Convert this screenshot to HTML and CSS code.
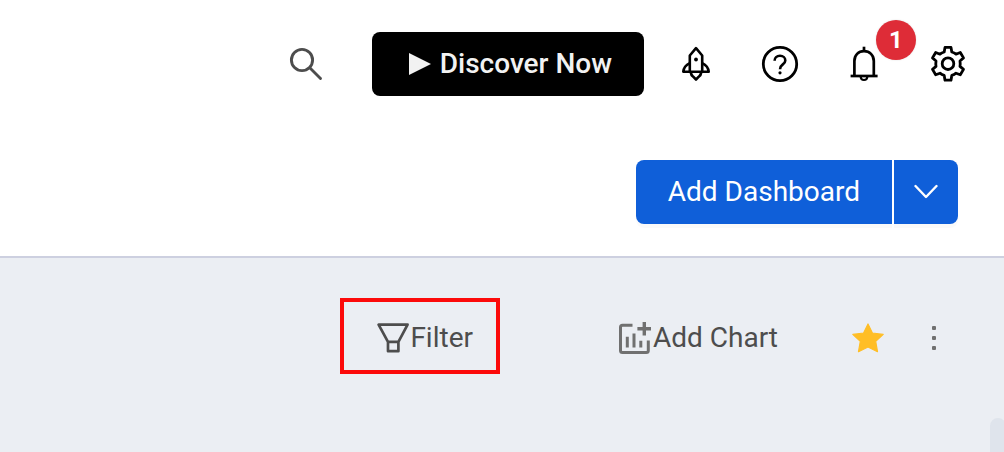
FILE: index.html
```html
<!DOCTYPE html>
<html lang="en">
<head>
<meta charset="utf-8">
<meta name="viewport" content="width=device-width, initial-scale=1">
<title>Dashboards</title>
<link rel="stylesheet" href="styles.css">
</head>
<body>
<header class="header">
  <div class="topbar">
    <button class="icon-btn search" type="button" aria-label="Search">
      <svg class="icon" viewBox="0 0 40 40"><g fill="none" stroke="#4d4d4d" stroke-width="2.9" stroke-linecap="round"><circle cx="16" cy="16" r="10.6"/><path d="M24 24 34.5 34.5"/></g></svg>
    </button>
    <button class="discover" type="button">
      <svg class="play" viewBox="0 0 24 24"><path d="M1 1 23 12 1 23z" fill="#f2f2f2"/></svg>
      <span>Discover Now</span>
    </button>
    <nav class="tools" aria-label="Tools">
      <button class="icon-btn" type="button" aria-label="What's new">
        <svg class="icon" viewBox="0 0 40 40"><g fill="none" stroke="#000" stroke-width="2.6" stroke-linejoin="round"><path d="M13.8 28V11.5L20 4.2l6.2 7.3V28"/><path d="M13.8 19.2C10 21 7.7 24 7.3 27.7H32.7C32.3 24 30 21 26.2 19.2"/><path d="M14.8 28.5c.2 2 1 3.2 2.4 4.2L20 35.5l2.8-2.8c1.4-1 2.2-2.2 2.4-4.2"/></g><circle cx="20" cy="15.5" r="1.9"/></svg>
      </button>
      <button class="icon-btn" type="button" aria-label="Help">
        <svg class="icon" viewBox="0 0 40 40"><g fill="none" stroke="#000"><circle cx="20" cy="20" r="16.7" stroke-width="2.8"/><path d="M14.6 16.8c0-3 2.2-5 5.4-5s5.3 2 5.3 4.6c0 4.2-5.3 3.8-5.3 8.8" stroke-width="2.6"/></g><circle cx="20" cy="28.8" r="1.6"/></svg>
      </button>
      <button class="icon-btn" type="button" aria-label="Notifications, 1 new">
        <svg class="icon" viewBox="0 0 40 40"><g fill="none" stroke="#000" stroke-width="2.7"><path d="M20 2.7v4"/><path d="M10.4 32V17c0-6 4-9.8 9.6-9.8s9.8 3.8 9.8 9.8v15"/><path d="M6.6 32h27"/><path d="M16.6 32.5c.2 2.2 1.4 3.5 3.4 3.5s3.2-1.3 3.4-3.5" stroke-width="2.2"/></g></svg>
        <span class="badge">1</span>
      </button>
      <button class="icon-btn" type="button" aria-label="Settings">
        <svg class="icon" viewBox="0 0 40 40"><g fill="none" stroke="#000" stroke-width="2.8" stroke-linejoin="round"><path d="M17 3.4h6l.8 4.6q2.400.7 4.200 2.200l4.300-1.700 3.200 5.400-3.500 3.100q.4 2.700 0 5.400l3.500 3-3.200 5.400-4.300-1.600q-1.800 1.500-4.200 2.200L23 36.200h-6l-.8-4.800q-2.400-.7-4.200-2.200l-4.300 1.600-3.200-5.400 3.500-3q-.4-2.700 0-5.400l-3.500-3.100 3.200-5.400 4.300 1.700q1.800-1.500 4.200-2.200z"/><circle cx="20" cy="19.7" r="5.800"/></g></svg>
      </button>
    </nav>
  </div>
  <div class="actions">
    <button class="primary" type="button">Add Dashboard</button>
    <button class="primary more" type="button" aria-label="More add options">
      <svg class="chevron" viewBox="0 0 24 24"><path d="M1.5 6 12 17 22.5 6" fill="none" stroke="#fff" stroke-width="2.4" stroke-linecap="round" stroke-linejoin="round"/></svg>
    </button>
  </div>
</header>
<main class="board">
  <div class="toolbar">
    <button class="tool filter" type="button">
      <svg class="tool-icon" viewBox="0 2 34 40"><path d="M2.600 8.600h29L22.400 25.800H12z M12 25.800h10.400v9.400H12z" fill="none" stroke="#4d4d4d" stroke-width="2.700" stroke-linejoin="round"/></svg>
      <span>Filter</span>
    </button>
    <button class="tool add-chart" type="button">
      <svg class="tool-icon" viewBox="1 2 34 40"><g fill="none" stroke="#707070"><path d="M14.500 9.200H4.500Q2.500 9.200 2.500 11.200v23.400Q2.500 36.600 4.500 36.600h23.800Q30.300 36.600 30.300 34.600v-10" stroke-width="3"/><path d="M9.300 20.800v10.600M16 17.600v13.800M22.800 24.800v6.600" stroke-width="3"/><path d="M26.300 6v13.400M19.400 12.700H33" stroke-width="3.400"/></g></svg>
      <span>Add Chart</span>
    </button>
    <button class="tool star" type="button" aria-label="Favourite">
      <svg class="icon" viewBox="0 0 40 40"><path d="M20 6 24.400 15 35.200 16.400 27.700 23.400 29.500 33.700 20 29 10.500 33.700 12.300 23.400 4.800 16.400 15.600 15z" fill="#ffbe26" stroke="#ffbe26" stroke-width="1.200" stroke-linejoin="round"/></svg>
    </button>
    <button class="tool" type="button" aria-label="More options">
      <svg class="icon" viewBox="0 0 40 40"><g fill="#707070"><rect x="18" y="8" width="4" height="4" rx="1"/><rect x="18" y="18" width="4" height="4" rx="1"/><rect x="18" y="28" width="4" height="4" rx="1"/></g></svg>
    </button>
  </div>
  <div class="scroll-thumb"></div>
</main>
</body>
</html>
```
FILE: styles.css
```css
* {
  box-sizing: border-box;
}

body {
  margin: 0;
  min-height: 100vh;
  display: flex;
  flex-direction: column;
  background: #fff;
  font: 400 28px/32px Roboto, "Liberation Sans", sans-serif;
}

button {
  margin: 0;
  padding: 0;
  border: 0;
  background: none;
  color: inherit;
  font: inherit;
  white-space: nowrap;
  cursor: pointer;
}

svg {
  display: block;
  flex: none;
}

.header {
  display: flex;
  flex-direction: column;
  gap: 64px;
  padding: 32px 0;
  border-bottom: 2px solid #cdd0e0;
}

.topbar {
  display: flex;
  align-items: center;
  justify-content: flex-end;
  padding-right: 36px;
}

.icon-btn {
  position: relative;
  flex: none;
}

.icon {
  width: 40px;
  height: 40px;
}

.search {
  margin-right: 46px;
}

.discover {
  display: flex;
  align-items: center;
  gap: 8px;
  height: 64px;
  padding: 0 32px 0 36px;
  border-radius: 8px;
  background: #000;
  color: #f2f2f2;
  font-weight: 500;
}

.play,
.chevron {
  width: 24px;
  height: 24px;
}

.tools {
  display: flex;
  gap: 44px;
  margin-left: 32px;
}

.badge {
  position: absolute;
  left: 32px;
  top: -24px;
  width: 40px;
  height: 40px;
  border-radius: 50%;
  background: #de2c37;
  box-shadow: 0 0 2px #00000022;
  color: #fff;
  font-size: 24px;
  font-weight: 700;
  line-height: 40px;
  text-align: center;
}

.actions {
  display: flex;
  justify-content: flex-end;
  gap: 2px;
  padding-right: 46px;
}

.primary {
  height: 64px;
  padding: 0 32px;
  border-radius: 8px 0 0 8px;
  background: #0f5fd9;
  box-shadow: 0 4px 0 #00000005;
  color: #fff;
}

.more {
  padding: 0 20px;
  border-radius: 0 8px 8px 0;
}

.board {
  position: relative;
  flex: 1;
  overflow: hidden;
  background: #ebeef3;
}

.toolbar {
  display: flex;
  align-items: flex-start;
  justify-content: flex-end;
  padding: 40px 50px 40px 0;
}

.tool {
  display: flex;
  align-items: center;
  height: 80px;
  color: #4d4d4d;
}

.tool-icon {
  width: 34px;
  height: 40px;
}

.filter {
  height: 76px;
  margin-right: 119px;
  padding: 4px 23px 0 32px;
  border: 4px solid #fc0a0a;
}

.add-chart {
  margin-right: 70px;
}

.star {
  margin-right: 26px;
}

.scroll-thumb {
  position: absolute;
  top: 160px;
  right: -2px;
  bottom: -8px;
  width: 16px;
  border-radius: 8px;
  background: #dfe4ec;
}
```
